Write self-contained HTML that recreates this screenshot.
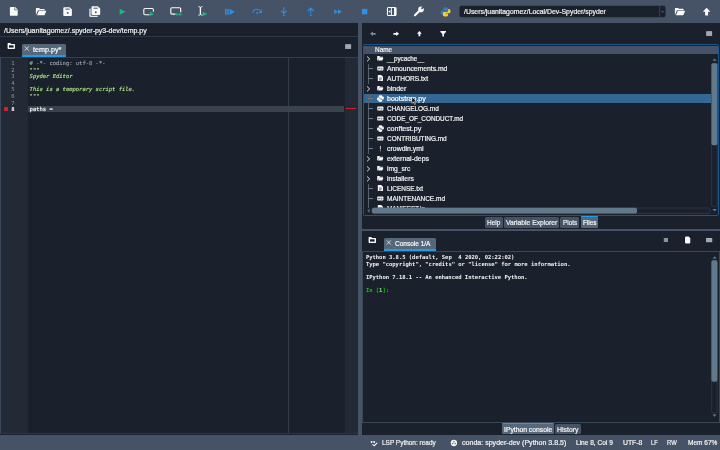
<!DOCTYPE html>
<html><head><meta charset="utf-8"><title>Spyder</title>
<style>
*{box-sizing:border-box;margin:0;padding:0}
html,body{width:720px;height:450px;overflow:hidden;background:#1b212c;font-family:"Liberation Sans",sans-serif;color:#e0e1e3}
body{position:relative}
.abs{position:absolute}
.t{position:absolute;white-space:pre;line-height:10px;display:inline-block;transform-origin:0 50%}
.m{position:absolute;white-space:pre;font-family:"DejaVu Sans Mono","Liberation Mono",monospace;font-size:5.500px;line-height:6.500px}
.tab{position:absolute;background:#465265;border-radius:1.500px}
.tabsel{position:absolute;background:#54687a;border-radius:1.500px 1.500px 0 0}
</style></head><body><div id="root" style="position:absolute;left:0;top:0;width:720px;height:450px;will-change:transform">

<!-- ===== main toolbar ===== -->
<div class="abs" style="left:0;top:0;width:720px;height:22.800px;background:#465265"></div>
<svg class="abs" style="left:0;top:0" width="720" height="23" viewBox="0 0 720 23">
 <!-- new file -->
 <path d="M9.900 7.800q0-.9.900-.9h4.300l2.600 2.600v5.400q0 .9-.9.900h-6q-.9 0-.9-.9z" fill="#fafafa"/>
 <path d="M14.700 7.400v2.500h2.500" fill="none" stroke="#465265" stroke-width=".7"/>
 <!-- open -->
 <path d="M35.900 14.900v-6.300q0-.6.600-.6h2.600l.9.900h4.100q.6 0 .6.600v.800h-6.300q-.5 0-.7.500l-1.700 4.200z" fill="#fafafa"/>
 <path d="M37 15.200l1.600-4q.15-.4.600-.4h6.600q.6 0 .4.550l-1.500 3.500q-.15.350-.6.350z" fill="#fafafa"/>
 <!-- save -->
 <path d="M63.300 8.200q0-.9.900-.9h5.400l2.300 2.300v5.400q0 .9-.9.900h-6.800q-.9 0-.9-.9z" fill="#fafafa"/>
 <rect x="65.400" y="8.600" width="4.300" height="1" fill="#465265"/>
 <circle cx="67.700" cy="12.900" r=".95" fill="#465265"/>
 <!-- save all -->
 <path d="M89.300 9.400q0-.8.800-.8h.600v6.200q0 .9.900.9h6.400v.4q0 .8-.8.800h-7.100q-.8 0-.8-.8z" fill="#e4e6e9"/>
 <path d="M91.500 7.100q0-.9.900-.9h5.400l2.400 2.400v5.500q0 .9-.9.900h-6.900q-.9 0-.9-.9z" fill="#fafafa"/>
 <rect x="93.500" y="7.700" width="4.200" height="1" fill="#465265"/>
 <circle cx="95.800" cy="12.200" r=".95" fill="#465265"/>
 <!-- run -->
 <path d="M119.700 8.700l5.800 3l-5.800 3z" fill="#17b982"/>
 <!-- run cell -->
 <path d="M149.500 14.700h-4.500q-1.200 0-1.200-1.200v-3.800q0-1.200 1.200-1.200h7.200q1.200 0 1.200 1.200v2" fill="none" stroke="#fafafa" stroke-width="1.100"/>
 <path d="M149.800 11.800l4.300 2.200l-4.300 2.200z" fill="#17b982"/>
 <!-- run cell advance -->
 <path d="M175.500 14.100h-3.500q-1.200 0-1.200-1.200v-4q0-1.200 1.200-1.200h7.500q1.200 0 1.200 1.200v3.300" fill="none" stroke="#fafafa" stroke-width="1.150"/>
 <path d="M176.300 12.700l3 1.650l-3 1.650zM179.300 12.700l3 1.650l-3 1.650z" fill="#17b982"/>
 <!-- run selection -->
 <path d="M198.300 6.600q1.700 0 2.100 .8q.4-.8 2.100-.8M198.300 15.200q1.700 0 2.100-.8q.4 .8 2.100 .8" fill="none" stroke="#fafafa" stroke-width=".9"/>
 <path d="M200.400 7v7.800" fill="none" stroke="#fafafa" stroke-width="1.350"/>
 <path d="M202.700 11.800l4.700 2.150l-4.700 2.150z" fill="#17b982"/>
 <!-- debug -->
 <path d="M225 8.800h1.500v6h-1.500zM227.300 8.800h1.500v6h-1.500zM229.600 8.700l5.200 3.100l-5.200 3.100z" fill="#2e8fe3"/>
 <!-- step over -->
 <path d="M252.800 12.600q.9-3.400 4.300-3.400q2.600 0 3.800 2.500" fill="none" stroke="#2e8fe3" stroke-width="1.100"/>
 <path d="M261.800 9.600v3.500h-3.400z" fill="#2e8fe3"/>
 <circle cx="257.100" cy="13.100" r="1" fill="#2e8fe3"/>
 <!-- step in -->
 <path d="M283.800 7v6.200M281 10.600l2.800 2.800l2.800-2.800" fill="none" stroke="#2e8fe3" stroke-width="1.100"/>
 <circle cx="283.800" cy="15.200" r=".9" fill="#2e8fe3"/>
 <!-- step out -->
 <path d="M310.700 13.500v-5M307.800 11l2.900-2.900l2.900 2.900" fill="none" stroke="#2e8fe3" stroke-width="1.100"/>
 <circle cx="310.700" cy="15.200" r=".9" fill="#2e8fe3"/>
 <!-- continue -->
 <path d="M334.200 9.300l3.900 2.400l-3.900 2.400zM338 9.300l3.900 2.400l-3.900 2.400z" fill="#2e8fe3"/>
 <!-- stop -->
 <rect x="361.900" y="8.800" width="5.500" height="5.500" fill="#2e8fe3"/>
 <!-- maximize -->
 <rect x="387.450" y="7.550" width="8.400" height="7.900" rx="1" fill="none" stroke="#fafafa" stroke-width="1.100"/>
 <path d="M391.400 7.500v8" stroke="#fafafa" stroke-width="1"/>
 <rect x="394" y="7.500" width="2.300" height="8" fill="#fafafa"/>
 <path d="M390.300 9.900v3.200l-2-1.600z" fill="#fafafa"/>
 <!-- wrench -->
 <path d="M415 15.300l5-5" stroke="#fafafa" stroke-width="2.200" stroke-linecap="round"/>
 <circle cx="421" cy="9.400" r="2.800" fill="#fafafa"/>
 <path d="M421.500 8.900l3.200-3.200" stroke="#465265" stroke-width="1.700"/>
 <!-- python -->
 <path d="M445.400 7.200c-2 0-2.300.9-2.300 1.600v1.100h2.400v.5h-3.400c-1 0-1.500.9-1.500 2.100c0 1.300.6 2.100 1.400 2.100h.9v-1.300c0-.9.800-1.600 1.600-1.600h2.400c.7 0 1.300-.6 1.300-1.300v-1.600c0-.7-.6-1.600-2.800-1.600z" fill="#3b7cb6"/>
 <path d="M445.700 16.500c2 0 2.300-.9 2.300-1.600v-1.100h-2.400v-.5h3.400c1 0 1.500-.9 1.500-2.100c0-1.300-.6-2.100-1.400-2.100h-.9v1.300c0 .9-.8 1.600-1.600 1.600h-2.400c-.7 0-1.300.6-1.300 1.300v1.600c0 .7.600 1.700 2.800 1.700z" fill="#f5cd3c"/>
 <!-- combobox -->
 <rect x="459.500" y="5.700" width="206" height="11.600" rx="1.800" fill="#1b212c"/>
 <path d="M659.500 6.200v10.600" stroke="#3a4652" stroke-width=".8"/>
 <path d="M661.300 11l1.200 1.200l1.200-1.200" fill="none" stroke="#7d8a96" stroke-width=".7"/>
 <!-- folder -->
 <path d="M674.900 14.900v-6.400q0-.6.600-.6h2.600l.9.900h4q.6 0 .6.600v.800h-6.200q-.5 0-.7.500l-1.700 4.200z" fill="#fafafa"/>
 <path d="M676 15.200l1.600-4q.15-.4.600-.4h6.400q.6 0 .4.550l-1.500 3.500q-.15.350-.6.350z" fill="#fafafa"/>
 <!-- up arrow -->
 <path d="M706.600 7.800l3.800 3.900h-2.300v3.800h-3v-3.800h-2.300z" fill="#fafafa"/>
</svg>
<span class="t" style="left:464.30px;top:7px;font-size:7.0px;transform:scaleX(0.9830);color:#f2f3f4;-webkit-text-stroke:0.2px #f2f3f4;">/Users/juanitagomez/Local/Dev-Spyder/spyder</span>

<!-- ===== separators ===== -->
<div class="abs" style="left:358px;top:22.800px;width:4.200px;height:412px;background:#465265"></div>
<div class="abs" style="left:362px;top:228.600px;width:358px;height:2.500px;background:#465265"></div>
<div class="abs" style="left:0;top:435px;width:720px;height:15px;background:#465265"></div>

<!-- ===== editor pane ===== -->
<span class="t" style="left:4.30px;top:26px;font-size:7.2px;transform:scaleX(0.9732);color:#f2f3f4;-webkit-text-stroke:0.2px #f2f3f4;">/Users/juanitagomez/.spyder-py3-dev/temp.py</span>
<div class="abs" style="left:0;top:36.400px;width:358px;height:1px;background:#2d3946"></div>
<svg class="abs" style="left:7px;top:42px" width="9" height="8" viewBox="0 0 9 8"><path d="M.6 1.600q0-.6.6-.6h2.100l.8.900h3.300q.6 0 .6.600v3.800q0 .6-.6.600h-6.200q-.6 0-.6-.6z" fill="#fafafa"/><rect x="2" y="3.300" width="4.600" height="2.300" fill="#1b212c"/></svg>
<div class="tabsel" style="left:22px;top:43.900px;width:44.100px;height:12.800px;border-bottom:2px solid #259ae9"></div>
<svg class="abs" style="left:24px;top:46px" width="6" height="6" viewBox="0 0 6 6"><path d="M.8 .4l4 4.200M4.800 .4l-4 4.200" stroke="#fafafa" stroke-width=".75"/></svg>
<span class="t" style="left:32.80px;top:45px;font-size:7.0px;transform:scaleX(1.0244);color:#fafafa;-webkit-text-stroke:0.2px #fafafa;">temp.py*</span>
<svg class="abs" style="left:345px;top:44px" width="7" height="6" viewBox="0 0 7 6"><rect x=".2" y=".2" width="5.900" height="4.700" fill="#adb2be"/><path d="M.2 1.800h5.900M.2 3.400h5.900" stroke="#8c93a1" stroke-width=".5"/></svg>
<!-- editor box -->
<div class="abs" style="left:.3px;top:56.500px;width:358px;height:377.800px;border:1px solid #2b3644;border-top-color:#33404e;border-left-color:#3a4859"></div>
<div class="abs" style="left:1.300px;top:57.500px;width:27px;height:375px;background:#232a36"></div>
<div class="abs" style="left:344.500px;top:57.500px;width:13px;height:375px;background:#232a36"></div>
<div class="abs" style="left:288.300px;top:57.500px;width:.9px;height:375px;background:#343e4a"></div>
<div class="abs" style="left:28.300px;top:105.700px;width:316.200px;height:6.300px;background:#39424d"></div>
<div class="abs" style="left:346px;top:107.900px;width:10px;height:1.500px;background:#d0202b"></div>
<div class="abs" style="left:3.600px;top:106.700px;width:4.300px;height:4.300px;background:#d0202b;border-radius:.5px"></div>
<span class="m" style="left:11.20px;top:60.00px;letter-spacing:-0.013px;color:#8f99a3;">1</span>
<span class="m" style="left:29.60px;top:60.00px;letter-spacing:-0.012px;color:#9ba3ab;-webkit-text-stroke:0.12px #9ba3ab;"># -*- coding: utf-8 -*-</span>
<span class="m" style="left:11.20px;top:67.00px;letter-spacing:-0.013px;color:#8f99a3;">2</span>
<span class="m" style="left:29.60px;top:67.00px;letter-spacing:-0.013px;color:#b2e688;font-style:italic;-webkit-text-stroke:0.12px #b2e688;">&quot;&quot;&quot;</span>
<span class="m" style="left:11.20px;top:73.00px;letter-spacing:-0.013px;color:#8f99a3;">3</span>
<span class="m" style="left:29.60px;top:73.00px;letter-spacing:-0.011px;color:#b2e688;font-style:italic;-webkit-text-stroke:0.12px #b2e688;">Spyder Editor</span>
<span class="m" style="left:11.20px;top:80.00px;letter-spacing:-0.013px;color:#8f99a3;">4</span>
<span class="m" style="left:11.20px;top:86.00px;letter-spacing:-0.013px;color:#8f99a3;">5</span>
<span class="m" style="left:29.60px;top:86.00px;letter-spacing:-0.012px;color:#b2e688;font-style:italic;-webkit-text-stroke:0.12px #b2e688;">This is a temporary script file.</span>
<span class="m" style="left:11.20px;top:93.00px;letter-spacing:-0.013px;color:#8f99a3;">6</span>
<span class="m" style="left:29.60px;top:93.00px;letter-spacing:-0.013px;color:#b2e688;font-style:italic;-webkit-text-stroke:0.12px #b2e688;">&quot;&quot;&quot;</span>
<span class="m" style="left:11.20px;top:100.00px;letter-spacing:-0.013px;color:#8f99a3;">7</span>
<span class="m" style="left:11.20px;top:106.00px;letter-spacing:-0.013px;color:#ffffff;font-weight:bold;">8</span>
<span class="m" style="left:29.60px;top:106.00px;letter-spacing:-0.013px;color:#fafafa;-webkit-text-stroke:0.12px #fafafa;">paths = </span>

<!-- ===== files pane ===== -->
<svg class="abs" style="left:362px;top:23px" width="358" height="22" viewBox="0 0 358 22">
  <path d="M8 10.800l2.900-2.300v1.400h2.700v1.800h-2.700v1.400z" fill="#7f8a95"/>
  <path d="M37.100 10.800l-2.900-2.300v1.400h-2.800v1.800h2.800v1.400z" fill="#fafafa"/>
  <path d="M57.400 8l2.400 2.800h-1.500v2.500h-1.800v-2.500h-1.500z" fill="#fafafa"/>
  <path d="M78.400 8h5.600v.9l-2 2.200v2.500h-1.600v-2.500l-2-2.200z" fill="#fafafa"/>
  <rect x="344.200" y="8.200" width="5.900" height="4.700" fill="#adb2be"/><path d="M344.200 9.800h5.900M344.200 11.400h5.900" stroke="#8c93a1" stroke-width=".5"/>
</svg>
<div class="abs" style="left:363px;top:44.300px;width:356px;height:171.500px;border:.8px solid #1c558a;border-radius:1.500px"></div>
<div class="abs" style="left:364px;top:45.800px;width:354px;height:8.200px;background:#465265"></div>
<span class="t" style="left:375.10px;top:45px;font-size:6.7px;transform:scaleX(0.9583);color:#f2f3f4;-webkit-text-stroke:0.2px #f2f3f4;">Name</span>
<div class="abs" style="left:364px;top:54px;width:347px;height:153.700px;overflow:hidden"><div class="abs" style="left:-364px;top:-54px;width:720px;height:450px">
<svg class="abs" style="left:366px;top:55.8px" width="5" height="6" viewBox="0 0 5 6"><path d="M1.100 .5l2.500 2.400l-2.500 2.400" fill="none" stroke="#f0f1f2" stroke-width=".95"/></svg>
<svg class="abs" style="left:376.800px;top:55.3px" width="7" height="7" viewBox="0 0 7 7"><path d="M.2 5.300v-3.800q0-.5.5-.5h1.700l.7.700h2.500q.5 0 .5.500v.600h-3.900l-1.200 2.600z" fill="#fafafa"/><path d="M1.100 5.500l1.200-2.500h4.100l-1.200 2.500z" fill="#fafafa"/></svg>
<span class="t" style="left:387.30px;top:54px;font-size:7.0px;transform:scaleX(0.8954);color:#f4f5f6;-webkit-text-stroke:0.2px #f4f5f6;">__pycache__</span>
<div class="abs" style="left:367.700px;top:63.8px;width:.7px;height:10px;background:#56616e"></div>
<div class="abs" style="left:367.700px;top:68.45px;width:5.600px;height:.7px;background:#6f7985"></div>
<svg class="abs" style="left:376.800px;top:65.3px" width="7" height="7" viewBox="0 0 7 7"><rect x=".2" y="1.600" width="6.200" height="3.900" rx=".7" fill="#fafafa"/><path d="M1.200 4.400v-1.600l.8.900l.8-.9v1.600M4.700 2.700v1.500M4 3.700l.7.700l.7-.7" fill="none" stroke="#1b212c" stroke-width=".5"/></svg>
<span class="t" style="left:387.30px;top:64px;font-size:7.0px;transform:scaleX(0.9700);color:#f4f5f6;-webkit-text-stroke:0.2px #f4f5f6;">Announcements.md</span>
<div class="abs" style="left:367.700px;top:73.8px;width:.7px;height:10px;background:#56616e"></div>
<div class="abs" style="left:367.700px;top:78.45px;width:5.600px;height:.7px;background:#6f7985"></div>
<svg class="abs" style="left:376.800px;top:75.3px" width="7" height="7" viewBox="0 0 7 7"><path d="M.8 .4q0-.5.5-.5h2.800l1.900 1.900v3.700q0 .5-.5.500h-4.200q-.5 0-.5-.5z" fill="#fafafa"/><path d="M2 3h2.800M2 4.100h2.800M2 5.100h1.800" stroke="#1b212c" stroke-width=".5"/></svg>
<span class="t" style="left:387.30px;top:74px;font-size:7.0px;transform:scaleX(0.9412);color:#f4f5f6;-webkit-text-stroke:0.2px #f4f5f6;">AUTHORS.txt</span>
<svg class="abs" style="left:366px;top:85.8px" width="5" height="6" viewBox="0 0 5 6"><path d="M1.100 .5l2.500 2.400l-2.500 2.400" fill="none" stroke="#f0f1f2" stroke-width=".95"/></svg>
<svg class="abs" style="left:376.800px;top:85.3px" width="7" height="7" viewBox="0 0 7 7"><path d="M.2 5.300v-3.800q0-.5.5-.5h1.700l.7.700h2.500q.5 0 .5.500v.600h-3.900l-1.200 2.600z" fill="#fafafa"/><path d="M1.100 5.500l1.200-2.500h4.100l-1.200 2.500z" fill="#fafafa"/></svg>
<span class="t" style="left:387.30px;top:84px;font-size:7.0px;transform:scaleX(0.9862);color:#f4f5f6;-webkit-text-stroke:0.2px #f4f5f6;">binder</span>
<div class="abs" style="left:364px;top:94.0px;width:346.500px;height:9px;background:#346792"></div>
<div class="abs" style="left:367.700px;top:93.8px;width:.7px;height:10px;background:#56616e"></div>
<div class="abs" style="left:367.700px;top:98.45px;width:5.600px;height:.7px;background:#6f7985"></div>
<svg class="abs" style="left:376.800px;top:95.3px" width="7" height="7" viewBox="0 0 7 7"><path d="M3.400 .2c-1.600 0-1.700.7-1.700 1.200v.8h1.800v.3h-2.500c-.7 0-1 .7-1 1.500c0 .9.400 1.500 1 1.500h.6v-.9c0-.7.600-1.200 1.200-1.200h1.800c.5 0 .9-.4.900-.9v-1.100c0-.5-.4-1.200-2.100-1.200z" fill="#fafafa"/><path d="M3.500 6.900c1.600 0 1.700-.7 1.700-1.200v-.8h-1.800v-.3h2.500c.7 0 1-.7 1-1.500c0-.9-.4-1.500-1-1.500h-.6v.9c0 .7-.6 1.200-1.200 1.200h-1.800c-.5 0-.9.400-.9.900v1.100c0 .5.400 1.200 2.100 1.200z" fill="#fafafa"/></svg>
<span class="t" style="left:387.30px;top:94px;font-size:7.0px;transform:scaleX(1.0070);color:#ffffff;-webkit-text-stroke:0.2px #ffffff;">bootstrap.py</span>
<div class="abs" style="left:367.700px;top:103.8px;width:.7px;height:10px;background:#56616e"></div>
<div class="abs" style="left:367.700px;top:108.45px;width:5.600px;height:.7px;background:#6f7985"></div>
<svg class="abs" style="left:376.800px;top:105.3px" width="7" height="7" viewBox="0 0 7 7"><rect x=".2" y="1.600" width="6.200" height="3.900" rx=".7" fill="#fafafa"/><path d="M1.200 4.400v-1.600l.8.900l.8-.9v1.600M4.700 2.700v1.500M4 3.700l.7.700l.7-.7" fill="none" stroke="#1b212c" stroke-width=".5"/></svg>
<span class="t" style="left:387.30px;top:104px;font-size:7.0px;transform:scaleX(0.9166);color:#f4f5f6;-webkit-text-stroke:0.2px #f4f5f6;">CHANGELOG.md</span>
<div class="abs" style="left:367.700px;top:113.8px;width:.7px;height:10px;background:#56616e"></div>
<div class="abs" style="left:367.700px;top:118.45px;width:5.600px;height:.7px;background:#6f7985"></div>
<svg class="abs" style="left:376.800px;top:115.3px" width="7" height="7" viewBox="0 0 7 7"><rect x=".2" y="1.600" width="6.200" height="3.900" rx=".7" fill="#fafafa"/><path d="M1.200 4.400v-1.600l.8.900l.8-.9v1.600M4.700 2.700v1.500M4 3.700l.7.700l.7-.7" fill="none" stroke="#1b212c" stroke-width=".5"/></svg>
<span class="t" style="left:387.30px;top:114px;font-size:7.0px;transform:scaleX(0.9100);color:#f4f5f6;-webkit-text-stroke:0.2px #f4f5f6;">CODE_OF_CONDUCT.md</span>
<div class="abs" style="left:367.700px;top:123.8px;width:.7px;height:10px;background:#56616e"></div>
<div class="abs" style="left:367.700px;top:128.45px;width:5.600px;height:.7px;background:#6f7985"></div>
<svg class="abs" style="left:376.800px;top:125.3px" width="7" height="7" viewBox="0 0 7 7"><path d="M3.400 .2c-1.600 0-1.700.7-1.700 1.200v.8h1.800v.3h-2.500c-.7 0-1 .7-1 1.500c0 .9.400 1.500 1 1.500h.6v-.9c0-.7.600-1.200 1.200-1.200h1.800c.5 0 .9-.4.900-.9v-1.100c0-.5-.4-1.200-2.100-1.200z" fill="#fafafa"/><path d="M3.500 6.900c1.600 0 1.700-.7 1.700-1.200v-.8h-1.800v-.3h2.500c.7 0 1-.7 1-1.500c0-.9-.4-1.500-1-1.500h-.6v.9c0 .7-.6 1.200-1.200 1.200h-1.800c-.5 0-.9.400-.9.900v1.100c0 .5.400 1.200 2.100 1.200z" fill="#fafafa"/></svg>
<span class="t" style="left:387.30px;top:124px;font-size:7.0px;transform:scaleX(1.0130);color:#f4f5f6;-webkit-text-stroke:0.2px #f4f5f6;">conftest.py</span>
<div class="abs" style="left:367.700px;top:133.8px;width:.7px;height:10px;background:#56616e"></div>
<div class="abs" style="left:367.700px;top:138.45px;width:5.600px;height:.7px;background:#6f7985"></div>
<svg class="abs" style="left:376.800px;top:135.3px" width="7" height="7" viewBox="0 0 7 7"><rect x=".2" y="1.600" width="6.200" height="3.900" rx=".7" fill="#fafafa"/><path d="M1.200 4.400v-1.600l.8.900l.8-.9v1.600M4.700 2.700v1.500M4 3.700l.7.700l.7-.7" fill="none" stroke="#1b212c" stroke-width=".5"/></svg>
<span class="t" style="left:387.30px;top:134px;font-size:7.0px;transform:scaleX(0.9191);color:#f4f5f6;-webkit-text-stroke:0.2px #f4f5f6;">CONTRIBUTING.md</span>
<div class="abs" style="left:367.700px;top:143.8px;width:.7px;height:10px;background:#56616e"></div>
<div class="abs" style="left:367.700px;top:148.45px;width:5.600px;height:.7px;background:#6f7985"></div>
<svg class="abs" style="left:376.800px;top:145.3px" width="7" height="7" viewBox="0 0 7 7"><path d="M3.400 1v3.400" stroke="#e0e1e3" stroke-width=".9"/><circle cx="3.400" cy="5.800" r=".5" fill="#e0e1e3"/></svg>
<span class="t" style="left:387.30px;top:144px;font-size:7.0px;transform:scaleX(0.9904);color:#f4f5f6;-webkit-text-stroke:0.2px #f4f5f6;">crowdin.yml</span>
<svg class="abs" style="left:366px;top:155.8px" width="5" height="6" viewBox="0 0 5 6"><path d="M1.100 .5l2.500 2.400l-2.500 2.400" fill="none" stroke="#f0f1f2" stroke-width=".95"/></svg>
<svg class="abs" style="left:376.800px;top:155.3px" width="7" height="7" viewBox="0 0 7 7"><path d="M.2 5.300v-3.800q0-.5.5-.5h1.700l.7.700h2.500q.5 0 .5.500v.600h-3.900l-1.200 2.600z" fill="#fafafa"/><path d="M1.100 5.500l1.200-2.500h4.100l-1.200 2.500z" fill="#fafafa"/></svg>
<span class="t" style="left:387.30px;top:154px;font-size:7.0px;transform:scaleX(0.9901);color:#f4f5f6;-webkit-text-stroke:0.2px #f4f5f6;">external-deps</span>
<svg class="abs" style="left:366px;top:165.8px" width="5" height="6" viewBox="0 0 5 6"><path d="M1.100 .5l2.500 2.400l-2.500 2.400" fill="none" stroke="#f0f1f2" stroke-width=".95"/></svg>
<svg class="abs" style="left:376.800px;top:165.3px" width="7" height="7" viewBox="0 0 7 7"><path d="M.2 5.300v-3.800q0-.5.5-.5h1.700l.7.700h2.500q.5 0 .5.500v.600h-3.900l-1.200 2.600z" fill="#fafafa"/><path d="M1.100 5.500l1.200-2.500h4.100l-1.200 2.500z" fill="#fafafa"/></svg>
<span class="t" style="left:387.30px;top:164px;font-size:7.0px;transform:scaleX(0.9504);color:#f4f5f6;-webkit-text-stroke:0.2px #f4f5f6;">img_src</span>
<svg class="abs" style="left:366px;top:175.8px" width="5" height="6" viewBox="0 0 5 6"><path d="M1.100 .5l2.500 2.400l-2.500 2.400" fill="none" stroke="#f0f1f2" stroke-width=".95"/></svg>
<svg class="abs" style="left:376.800px;top:175.3px" width="7" height="7" viewBox="0 0 7 7"><path d="M.2 5.300v-3.800q0-.5.5-.5h1.700l.7.700h2.500q.5 0 .5.500v.600h-3.900l-1.200 2.600z" fill="#fafafa"/><path d="M1.100 5.500l1.200-2.500h4.100l-1.200 2.500z" fill="#fafafa"/></svg>
<span class="t" style="left:387.30px;top:174px;font-size:7.0px;transform:scaleX(0.9701);color:#f4f5f6;-webkit-text-stroke:0.2px #f4f5f6;">installers</span>
<div class="abs" style="left:367.700px;top:183.8px;width:.7px;height:10px;background:#56616e"></div>
<div class="abs" style="left:367.700px;top:188.45px;width:5.600px;height:.7px;background:#6f7985"></div>
<svg class="abs" style="left:376.800px;top:185.3px" width="7" height="7" viewBox="0 0 7 7"><path d="M.8 .4q0-.5.5-.5h2.800l1.900 1.900v3.700q0 .5-.5.500h-4.200q-.5 0-.5-.5z" fill="#fafafa"/><path d="M2 3h2.800M2 4.100h2.800M2 5.100h1.800" stroke="#1b212c" stroke-width=".5"/></svg>
<span class="t" style="left:387.30px;top:184px;font-size:7.0px;transform:scaleX(0.9186);color:#f4f5f6;-webkit-text-stroke:0.2px #f4f5f6;">LICENSE.txt</span>
<div class="abs" style="left:367.700px;top:193.8px;width:.7px;height:10px;background:#56616e"></div>
<div class="abs" style="left:367.700px;top:198.45px;width:5.600px;height:.7px;background:#6f7985"></div>
<svg class="abs" style="left:376.800px;top:195.3px" width="7" height="7" viewBox="0 0 7 7"><rect x=".2" y="1.600" width="6.200" height="3.900" rx=".7" fill="#fafafa"/><path d="M1.200 4.400v-1.600l.8.900l.8-.9v1.600M4.700 2.700v1.500M4 3.700l.7.700l.7-.7" fill="none" stroke="#1b212c" stroke-width=".5"/></svg>
<span class="t" style="left:387.30px;top:194px;font-size:7.0px;transform:scaleX(0.9261);color:#f4f5f6;-webkit-text-stroke:0.2px #f4f5f6;">MAINTENANCE.md</span>
<div class="abs" style="left:367.700px;top:203.8px;width:.7px;height:10px;background:#56616e"></div>
<div class="abs" style="left:367.700px;top:208.45px;width:5.600px;height:.7px;background:#6f7985"></div>
<svg class="abs" style="left:376.800px;top:205.3px" width="7" height="7" viewBox="0 0 7 7"><path d="M.8 .4q0-.5.5-.5h2.800l1.900 1.900v3.700q0 .5-.5.500h-4.200q-.5 0-.5-.5z" fill="#fafafa"/><path d="M2 3h2.800M2 4.100h2.800M2 5.100h1.800" stroke="#1b212c" stroke-width=".5"/></svg>
<span class="t" style="left:387.30px;top:204px;font-size:7.0px;transform:scaleX(0.9044);color:#f4f5f6;-webkit-text-stroke:0.2px #f4f5f6;">MANIFEST.in</span>
</div></div>
<svg class="abs" style="left:410.500px;top:96px" width="7" height="10" viewBox="0 0 7 10"><path d="M.9 .7v6.600l1.500-1.300l1.100 2.500l1-.4l-1.100-2.500h2z" fill="#0a0a0a" stroke="#f4f4f4" stroke-width=".55" stroke-linejoin="round"/></svg>
<!-- files scrollbars -->
<svg class="abs" style="left:364px;top:54px" width="355" height="162" viewBox="0 0 355 162">
 <!-- vertical -->
 <path d="M348.400 6.800l2.200-2.200l2.200 2.200z" fill="#60798b"/>
 <rect x="347.600" y="9.300" width="5.600" height="143" rx="1.500" fill="#1b212c" stroke="#32414b" stroke-width=".7"/>
 <rect x="347.400" y="9.200" width="6" height="82" rx="1.800" fill="#60798b"/>
 <path d="M348.400 155l2.200 2.200l2.200-2.200z" fill="#60798b"/>
 <!-- horizontal -->
 <path d="M5.500 154.600l-2 2.100l2 2.100z" fill="#60798b"/>
 <rect x="7.800" y="154" width="338" height="5.400" rx="1.500" fill="#1b212c" stroke="#32414b" stroke-width=".7"/>
 <rect x="8" y="153.800" width="265" height="5.800" rx="1.800" fill="#60798b"/>
</svg>
<!-- files tab bar -->
<div class="tab" style="left:485.400px;top:216.800px;width:17.200px;height:10.800px"></div>
<div class="tab" style="left:503.800px;top:216.800px;width:55.300px;height:10.800px"></div>
<div class="tab" style="left:560.400px;top:216.800px;width:18.600px;height:10.800px"></div>
<div class="tabsel" style="left:580.800px;top:216.300px;width:17.600px;height:11.300px;border-top:1.500px solid #259ae9;border-radius:1px"></div>
<span class="t" style="left:487.00px;top:218px;font-size:6.9px;transform:scaleX(0.9385);color:#f2f3f4;-webkit-text-stroke:0.2px #f2f3f4;">Help</span><span class="t" style="left:505.70px;top:218px;font-size:6.9px;transform:scaleX(0.9801);color:#f2f3f4;-webkit-text-stroke:0.2px #f2f3f4;">Variable Explorer</span><span class="t" style="left:562.80px;top:218px;font-size:6.9px;transform:scaleX(0.9264);color:#f2f3f4;-webkit-text-stroke:0.2px #f2f3f4;">Plots</span><span class="t" style="left:582.80px;top:218px;font-size:6.9px;transform:scaleX(0.9202);color:#fafafa;-webkit-text-stroke:0.2px #fafafa;">Files</span>

<!-- ===== console pane ===== -->
<svg class="abs" style="left:368.300px;top:236px" width="9" height="8" viewBox="0 0 9 8"><path d="M.6 1.600q0-.6.6-.6h2.100l.8.900h3.300q.6 0 .6.600v3.800q0 .6-.6.600h-6.200q-.6 0-.6-.6z" fill="#fafafa"/><rect x="2" y="3.300" width="4.600" height="2.300" fill="#1b212c"/></svg>
<div class="tabsel" style="left:384px;top:238px;width:51.600px;height:12.700px;border-bottom:2px solid #259ae9"></div>
<svg class="abs" style="left:385.600px;top:240.300px" width="6" height="6" viewBox="0 0 6 6"><path d="M.8 .4l3.900 4.100M4.700 .4l-3.900 4.100" stroke="#fafafa" stroke-width=".75"/></svg>
<span class="t" style="left:394.80px;top:239px;font-size:7.0px;transform:scaleX(0.9281);color:#fafafa;-webkit-text-stroke:0.2px #fafafa;">Console 1/A</span>
<svg class="abs" style="left:660px;top:234px" width="56" height="12" viewBox="0 0 56 12">
 <rect x="3.800" y="4" width="4.200" height="4" fill="#8b949d"/>
 <rect x="24.300" y="1.800" width="6.600" height="8.400" rx="1.800" fill="#0f151c"/>
 <path d="M25 3.500q0-1 1-1h2.700l1.600 1.600v4.400q0 1-1 1h-3.300q-1 0-1-1z" fill="#fafafa"/>
 <rect x="46" y="4" width="6.200" height="4.200" fill="#adb2be"/><path d="M46 5.400h6.200M46 6.800h6.200" stroke="#8c93a1" stroke-width=".5"/>
</svg>
<div class="abs" style="left:361.800px;top:250.800px;width:357.800px;height:172.200px;border:1.200px solid #394756"></div>
<span class="m" style="left:365.90px;top:254.00px;letter-spacing:-0.011px;color:#f4f4f4;font-weight:bold;">Python 3.8.5 (default, Sep  4 2020, 02:22:02)</span>
<span class="m" style="left:365.90px;top:261.00px;letter-spacing:-0.011px;color:#f4f4f4;font-weight:bold;">Type &quot;copyright&quot;, &quot;credits&quot; or &quot;license&quot; for more information.</span>
<span class="m" style="left:365.90px;top:274.00px;letter-spacing:-0.012px;color:#f4f4f4;font-weight:bold;">IPython 7.18.1 -- An enhanced Interactive Python.</span>
<span class="m" style="left:365.90px;top:287.00px;letter-spacing:-0.013px;color:#1fba1f;font-weight:bold;">In [<span style="color:#58ff58">1</span>]: </span>
<svg class="abs" style="left:710px;top:252px" width="9" height="170" viewBox="0 0 9 170">
 <path d="M2.400 6.400l2.200-2.200l2.200 2.200z" fill="#60798b"/>
 <rect x="1.700" y="8.300" width="5.500" height="152.500" rx="1.500" fill="#1b212c" stroke="#32414b" stroke-width=".7"/>
 <rect x="1.400" y="8.200" width="6" height="121.500" rx="1.800" fill="#60798b"/>
 <path d="M2.400 162.600l2.200 2.200l2.200-2.200z" fill="#60798b"/>
</svg>
<!-- console tab bar -->
<div class="tabsel" style="left:501.800px;top:422.800px;width:52.400px;height:11.700px;border-top:1.900px solid #259ae9;border-radius:1px"></div>
<div class="tab" style="left:555.300px;top:424.400px;width:25.700px;height:10.100px"></div>
<span class="t" style="left:503.60px;top:425px;font-size:6.9px;transform:scaleX(0.9827);color:#fafafa;-webkit-text-stroke:0.2px #fafafa;">IPython console</span><span class="t" style="left:557.40px;top:425px;font-size:6.9px;transform:scaleX(1.0022);color:#f2f3f4;-webkit-text-stroke:0.2px #f2f3f4;">History</span>

<!-- ===== status bar ===== -->
<svg class="abs" style="left:368px;top:437px" width="95" height="12" viewBox="0 0 95 12">
 <rect x="2.800" y="3.900" width="1.500" height="2.200" rx=".5" fill="#fafafa"/><rect x="5.400" y="3.900" width="1.600" height="2.200" rx=".5" fill="#fafafa"/>
 <path d="M4.700 7.600l1.700 1.100l2.500-2.600" fill="none" stroke="#fafafa" stroke-width="1.100" stroke-linecap="round" stroke-linejoin="round"/>
 <circle cx="85.900" cy="6" r="3.150" fill="#f4f5f6"/>
 <circle cx="85.900" cy="4.600" r=".6" fill="#465265"/><circle cx="84.500" cy="6.600" r=".65" fill="#465265"/><circle cx="87.300" cy="6.600" r=".65" fill="#465265"/>
 <path d="M85.900 4.600l-1.400 2h2.800z" fill="none" stroke="#8b96a1" stroke-width=".35"/>
</svg>
<span class="t" style="left:382.00px;top:438px;font-size:6.8px;transform:scaleX(0.9494);color:#f2f3f4;-webkit-text-stroke:0.2px #f2f3f4;">LSP Python: ready</span><span class="t" style="left:462.00px;top:438px;font-size:6.8px;transform:scaleX(1.0388);color:#f2f3f4;-webkit-text-stroke:0.2px #f2f3f4;">conda: spyder-dev (Python 3.8.5)</span><span class="t" style="left:576.20px;top:438px;font-size:6.8px;transform:scaleX(0.9641);color:#f2f3f4;-webkit-text-stroke:0.2px #f2f3f4;">Line 8, Col 9</span><span class="t" style="left:622.60px;top:438px;font-size:6.8px;transform:scaleX(1.0070);color:#f2f3f4;-webkit-text-stroke:0.2px #f2f3f4;">UTF-8</span><span class="t" style="left:651.00px;top:438px;font-size:6.8px;transform:scaleX(0.8315);color:#f2f3f4;-webkit-text-stroke:0.2px #f2f3f4;">LF</span><span class="t" style="left:667.30px;top:438px;font-size:6.8px;transform:scaleX(0.8658);color:#f2f3f4;-webkit-text-stroke:0.2px #f2f3f4;">RW</span><span class="t" style="left:687.60px;top:438px;font-size:6.8px;transform:scaleX(0.9572);color:#f2f3f4;-webkit-text-stroke:0.2px #f2f3f4;">Mem 67%</span>
</div></body></html>
